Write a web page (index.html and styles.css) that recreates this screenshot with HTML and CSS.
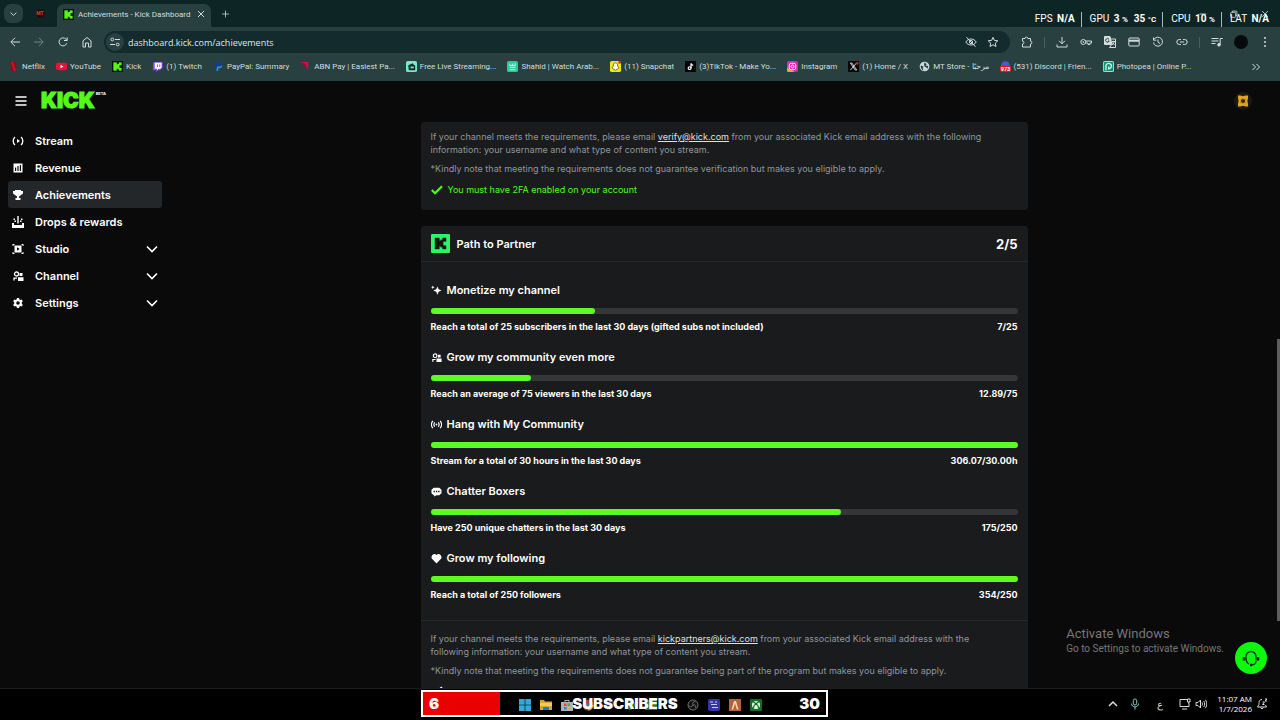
FILE: index.html
```html
<!DOCTYPE html>
<html lang="en">
<head>
  <meta charset="UTF-8">
  <meta name="viewport" content="width=device-width, initial-scale=1.0">
  <title>Achievements - Kick Dashboard</title>
  <link rel="stylesheet" href="styles.css">
</head>
<body>
  <svg class="sprite" aria-hidden="true">
    <symbol id="k-mark" viewBox="0 0 16 16">
      <rect x="2" y="2" width="5" height="12"/>
      <rect x="6" y="5" width="3" height="6"/>
      <rect x="8" y="4" width="3" height="8"/>
      <rect x="10" y="2" width="4" height="4"/>
      <rect x="10" y="10" width="4" height="4"/>
    </symbol>
    <symbol id="chevron" viewBox="0 0 12 12"><path d="M1 3.500l5 5 5-5" fill="none" stroke="currentColor" stroke-width="1.600"/></symbol>
    <symbol id="people" viewBox="0 0 12 12">
      <circle cx="4.500" cy="4" r="2" fill="none" stroke="currentColor" stroke-width="1.300"/>
      <path d="M2 10.500V8.200h3" fill="none" stroke="currentColor" stroke-width="1.300"/>
      <path d="M7.500 3h3v3h-3zM6 7.200h5.500v3.800H6z"/>
    </symbol>
    <symbol id="check" viewBox="0 0 12 12"><path d="M.8 6l3.200 3.200 7-7" fill="none" stroke="currentColor" stroke-width="2.200"/></symbol>
  </svg>

  <div class="browser">
    <div class="tab-strip">
      <button class="tab-search" aria-label="Search tabs"><svg viewBox="0 0 12 12"><use href="#chevron"/></svg></button>
      <a class="pinned-tab" href="#" aria-label="MT Store"><span>MT</span></a>
      <div class="tab">
        <svg class="favicon kick-icon" viewBox="0 0 16 16"><use href="#k-mark"/></svg>
        <span class="tab-title">Achievements - Kick Dashboard</span>
        <button aria-label="Close tab"><svg viewBox="0 0 12 12"><path d="M3 3l6 6M9 3l-6 6"/></svg></button>
      </div>
      <button class="new-tab" aria-label="New tab"><svg viewBox="0 0 12 12"><path d="M6 1.500v9M1.500 6h9"/></svg></button>
      <div class="window-buttons">
        <button aria-label="Minimize"><svg viewBox="0 0 12 12"><path d="M2 6h8"/></svg></button>
        <button aria-label="Restore"><svg viewBox="0 0 12 12"><rect x="2" y="4" width="6" height="6" rx="1"/><path d="M4 4V2.500h4.500a1 1 0 0 1 1 1V8H8"/></svg></button>
        <button aria-label="Close"><svg viewBox="0 0 12 12"><path d="M2.500 2.500l7 7M9.500 2.500l-7 7"/></svg></button>
      </div>
    </div>

    <div class="toolbar">
      <button aria-label="Back"><svg viewBox="0 0 12 12"><path d="M11 6H2M6 1.800L1.800 6 6 10.200"/></svg></button>
      <button class="dim" aria-label="Forward"><svg viewBox="0 0 12 12"><path d="M1 6h9M6 1.800L10.200 6 6 10.200"/></svg></button>
      <button aria-label="Reload"><svg viewBox="0 0 12 12"><path d="M9.800 7.300A4 4 0 1 1 9 3.200L10 4.300M10.200 1.300v3.200H7"/></svg></button>
      <button aria-label="Home"><svg viewBox="0 0 12 12"><path d="M2 11V4.800L6 1.500l4 3.300V11H7.500V7h-3v4z"/></svg></button>
      <div class="address">
        <span class="site-info"><svg viewBox="0 0 12 12"><circle cx="3.300" cy="3.500" r="1.400"/><path d="M6 3.500h5M1 8.500h5"/><circle cx="8.700" cy="8.500" r="1.400"/></svg></span>
        <input type="text" aria-label="Address" value="dashboard.kick.com/achievements">
        <button aria-label="Tracking"><svg viewBox="0 0 12 12"><path d="M.8 6C3 2 9 2 11.200 6 9 10 3 10 .8 6zM1.500 1.200l9 9.600"/><circle cx="6" cy="6" r="1.600"/></svg></button>
        <button aria-label="Bookmark"><svg viewBox="0 0 12 12"><path d="M6 1.300l1.400 3.100 3.400.4-2.500 2.300.7 3.400L6 8.800l-3 1.700.7-3.400L1.200 4.800l3.400-.4z"/></svg></button>
      </div>
      <button class="extensions" aria-label="Extensions"><svg viewBox="0 0 12 12"><path d="M1.500 2.500H4a1.400 1.400 0 0 1 2.800 0h2.700v2.700a1.400 1.400 0 0 1 0 2.800v3h-8V8a1.400 1.400 0 0 0 0-2.800z"/></svg></button>
      <span class="divider"></span>
      <button aria-label="Downloads"><svg viewBox="0 0 12 12"><path d="M6 1v6.500M3 4.800l3 3 3-3M1 8.500V11h10V8.500"/></svg></button>
      <button aria-label="Passwords"><svg viewBox="0 0 12 12"><circle cx="3.300" cy="6" r="2.500"/><circle cx="3.300" cy="6" r=".5"/><path d="M5.800 5h5.700v2H10v1.500H8V7H5.800"/></svg></button>
      <button aria-label="Translate"><svg viewBox="0 0 12 12"><path class="solid" d="M.5.5h5.500l2 8H.5z"/><path d="M7 3h4.500v8.500H5.500l2.300-3M8 5.500h3M9.500 4.800v1M10.500 5.700L8 9M8.500 6.500l2 2.500"/><path class="ink" d="M5 3.300A1.800 1.800 0 1 0 5.200 5H4"/></svg></button>
      <button aria-label="Payments"><svg viewBox="0 0 12 12"><rect x=".8" y="2" width="10.400" height="8" rx="1"/><path d="M1 4.700h10" stroke-width="2"/></svg></button>
      <button aria-label="History"><svg viewBox="0 0 12 12"><path d="M2 3.500A4.500 4.500 0 1 1 1.500 6.500M1.500 1.500v2.700h2.700M6 3.500V6.200L8 7.500"/></svg></button>
      <button aria-label="Copy link"><svg viewBox="0 0 12 12"><path d="M5 3.500H3.300a2.500 2.500 0 0 0 0 5H5M7 3.500h1.700a2.500 2.500 0 0 1 0 5H7M3.800 6h4.400"/></svg></button>
      <span class="divider"></span>
      <button aria-label="Media"><svg viewBox="0 0 12 12"><path d="M.5 2.500h7M.5 5h7M.5 7.500h4M9.200 8.500V2.500h2.500"/><circle class="solid" cx="8" cy="8.800" r="1.300"/></svg></button>
      <button aria-label="Profile"><span class="avatar"></span></button>
      <button aria-label="Menu"><svg viewBox="0 0 12 12"><path class="dots" d="M6 2v.01M6 6v.01M6 10v.01"/></svg></button>
    </div>

    <nav class="bookmarks">
      <a href="#"><svg viewBox="0 0 12 12"><path fill="#8f0c17" d="M3 1h2.500v10H3zM6.500 1H9v10H6.500z"/><path fill="#d0111c" d="M3 1h2.500L9 11H6.500z"/></svg>Netflix</a>
      <a href="#"><svg viewBox="0 0 12 12"><rect y="2" width="12" height="8" rx="2" fill="#e8123c"/><path fill="#fff" d="M5 4l3 2-3 2z"/></svg>YouTube</a>
      <a href="#"><svg class="kick-icon" viewBox="0 0 16 16"><use href="#k-mark"/></svg>Kick</a>
      <a href="#"><svg viewBox="0 0 12 12"><path fill="#8a4cf0" d="M2 1h9.500v6.500L8.500 10H6.500L4.500 12v-2H1V3z"/><path fill="#fff" d="M3 2h7.500v5L9 8.500H7L5.500 10V8.500H3z"/><path fill="#8a4cf0" d="M5.500 3.500h1v3h-1zM8 3.500h1v3H8z"/></svg>(1) Twitch</a>
      <a href="#"><svg viewBox="0 0 12 12"><path fill="#173c8c" d="M3.500 1H8c3 0 3 5-1 5H5l-.8 4H2z"/><path fill="#2d93dd" d="M9.500 4c1 3-1 4-3.500 4L5.500 11H3.700l.8-5H7c1.500 0 2-.8 2.500-2z"/></svg>PayPal: Summary</a>
      <a href="#"><svg viewBox="0 0 12 12"><path fill="#d1104f" d="M1 1h8v9z"/><path fill="#8d1038" d="M1 1l5 2 3 7z"/></svg>ABN Pay | Easiest Pa...</a>
      <a href="#"><svg viewBox="0 0 12 12"><rect width="12" height="12" rx="2" fill="#73ecc5"/><path fill="#10282a" d="M2.500 4.500l5-2 .8 1.500L10 5v5H3z"/><rect x="5" y="6" width="3.500" height="2" fill="#73ecc5"/></svg>Free Live Streaming...</a>
      <a href="#"><svg viewBox="0 0 12 12"><rect width="12" height="12" rx="2" fill="#2acb9c"/><path fill="none" stroke="#c6ffec" d="M3 3v2h6V2.500M6 3v2M3 7h6M3 9.500h6"/></svg>Shahid | Watch Arab...</a>
      <a href="#"><svg viewBox="0 0 12 12"><rect width="12" height="12" rx="2" fill="#f5e80b"/><path fill="#fff" stroke="#332f0a" stroke-width=".7" d="M6 2c2 0 2.300 1.500 2.300 3.500l1.500 2L8 9 6 10 4 9 2.200 7.500l1.500-2C3.700 3.500 4 2 6 2z"/><circle cx="10.500" cy="1.500" r="1.500" fill="#d62a2a"/></svg>(11) Snapchat</a>
      <a href="#"><svg viewBox="0 0 12 12"><rect width="12" height="12" fill="#050505"/><circle cx="5" cy="7.800" r="1.500" fill="none" stroke="#fff" stroke-width="1.300"/><path fill="none" stroke="#fff" stroke-width="1.300" d="M6.600 8V2.500c.3 1.500 1 2 2.400 2.200"/></svg>(3)TikTok - Make Yo...</a>
      <a href="#"><svg viewBox="0 0 12 12"><rect width="12" height="12" rx="2" fill="#d52bae"/><path fill="#f6a52f" d="M0 7l8 5H2a2 2 0 0 1-2-2z"/><rect x="2.500" y="2.500" width="7" height="7" rx="2" fill="none" stroke="#fff"/><circle cx="6" cy="6" r="1.600" fill="none" stroke="#fff"/></svg>Instagram</a>
      <a href="#"><svg viewBox="0 0 12 12"><rect width="12" height="12" fill="#080808"/><path fill="none" stroke="#ddd" d="M2.500 2.200h1.700l5.300 7.600H7.800zM9.300 2.200L2.700 9.800"/><circle cx="10" cy="2.500" r="1.500" fill="#c22734"/></svg>(1) Home / X</a>
      <a href="#"><svg viewBox="0 0 12 12"><circle cx="6" cy="6" r="5.300" fill="#cdd7d7"/><path fill="#2a4242" d="M2 5l3 1-1 2 1 2.500C2.500 9.500 1.500 7 2 5zM6 1.500l2.500 2L7 5l3 .5-.5 3L8 7 6 6 5.500 3.500z"/></svg>MT Store - مرحبًا</a>
      <a href="#"><svg viewBox="0 0 12 12"><circle cx="6" cy="5" r="4.800" fill="#4a58d8"/><rect y="5" width="12" height="7" rx="2" fill="#df1827"/><text class="badge-count" x="6" y="11">973</text></svg>(531) Discord | Frien...</a>
      <a href="#"><svg viewBox="0 0 12 12"><rect width="12" height="12" rx="2" fill="#8de7ce"/><rect x="1" y="1" width="10" height="10" rx="1" fill="#139275"/><path fill="none" stroke="#e5fff8" stroke-width="1.300" d="M3.200 10V6a3 3 0 1 1 3 2.500V6"/></svg>Photopea | Online P...</a>
      <button class="more" aria-label="More bookmarks"><svg viewBox="0 0 12 12"><path d="M2.500 3l3 3-3 3M6.500 3l3 3-3 3"/></svg></button>
    </nav>

    <div class="stats">
      <span>FPS <b>N/A</b></span>
      <span>GPU <b>3 <small>%</small></b><b>35 <small>°C</small></b></span>
      <span>CPU <b>10 <small>%</small></b></span>
      <span>LAT <b>N/A</b></span>
    </div>
  </div>

  <div class="page">
    <header class="page-header">
      <button class="menu-button" aria-label="Menu"><svg viewBox="0 0 12 12"><path d="M.5 2h11M.5 6h11M.5 10h11"/></svg></button>
      <a class="logo" href="#">KICK<sup>BETA</sup></a>
      <button class="account" aria-label="Account"><svg viewBox="0 0 12 12"><path fill="#e6a321" d="M1 .5h2.500L6 1.300 8.500.5H11V3l-.6 3 .6 3v2.500H8.500L6 10.700l-2.500.8H1V9l.6-3L1 3z"/><path fill="#3c2a0b" d="M6 3.200l.8 1.200H8.500l-.7 1.600.7 1.600H6.800L6 8.800l-.8-1.200H3.500L4.200 6l-.7-1.600h1.700z"/></svg></button>
    </header>

    <nav class="sidebar">
      <a href="#"><svg viewBox="0 0 12 12"><path class="line" d="M3 2C.6 4 .6 8 3 10M9 2c2.400 2 2.400 6 0 8"/><path d="M5 4l3 2-3 2z"/></svg>Stream</a>
      <a href="#"><svg viewBox="0 0 12 12"><path fill-rule="evenodd" d="M1.500 1.500h9v9h-9zM3 5.500V9h1.200V5.500zM5.400 4v5h1.200V4zM7.800 3v6H9V3z"/></svg>Revenue</a>
      <a class="active" href="#"><svg viewBox="0 0 12 12"><path d="M3 1h6v1h2v2.500L9 6 7 7.500V9h1.500v2h-5V9H5V7.500L3 6 1 4.500V2h2z"/></svg>Achievements</a>
      <a href="#"><svg viewBox="0 0 12 12"><path d="M0 7h2v2h8V7h2v5H0zM5.300 0h1.400v7.500H5.300zM1.500 2.500H3V4H1.500zM2.500 4.500H4V6H2.500zM9 2.500h1.500V4H9zM8 4.500h1.500V6H8z"/></svg>Drops &amp; rewards</a>
      <a href="#"><svg viewBox="0 0 12 12"><path fill-rule="evenodd" d="M2.500 2.500h7v7h-7zM5 4.300v3.400L7.700 6zM.5 1h2v1h-1v1h-1zM9.500 1h2v2h-1V2h-1zM.5 9h1v1h1v1h-2zM10.500 9h1v2h-2v-1h1z"/></svg>Studio<svg class="chevron" viewBox="0 0 12 12"><use href="#chevron"/></svg></a>
      <a href="#"><svg viewBox="0 0 12 12"><use href="#people"/></svg>Channel<svg class="chevron" viewBox="0 0 12 12"><use href="#chevron"/></svg></a>
      <a href="#"><svg viewBox="0 0 12 12"><path fill-rule="evenodd" d="M5 1h2l.3 1.300 1.200.7 1.300-.5 1 1.800-1 1v1.400l1 1-1 1.800-1.300-.5-1.200.7L7 11H5l-.3-1.300L3.500 9l-1.300.5-1-1.800 1-1V5.300l-1-1 1-1.800L3.500 3l1.200-.7zM6 4.200a1.800 1.800 0 1 0 0 3.600 1.800 1.800 0 0 0 0-3.600z"/></svg>Settings<svg class="chevron" viewBox="0 0 12 12"><use href="#chevron"/></svg></a>
    </nav>

    <main class="content">
      <section class="card requirements">
        <p>If your channel meets the requirements, please email <a href="mailto:verify@kick.com">verify@kick.com</a> from your associated Kick email address with the following information: your username and what type of content you stream.</p>
        <p>*Kindly note that meeting the requirements does not guarantee verification but makes you eligible to apply.</p>
        <div class="check"><svg viewBox="0 0 12 12"><use href="#check"/></svg>You must have 2FA enabled on your account</div>
      </section>

      <section class="card">
        <header class="card-header">
          <svg class="partner-icon" viewBox="-2 -2 20 20"><use href="#k-mark" width="16" height="16"/></svg>
          <h2>Path to Partner</h2>
          <strong>2/5</strong>
        </header>
        <div class="goals">
          <div class="goal">
            <h3><svg viewBox="0 0 12 12"><path d="M7 1.500l1.300 3.200L11.500 6 8.300 7.300 7 10.500 5.700 7.300 2.500 6l3.200-1.300zM2 .5l.6 1.400L4 2.500l-1.400.6L2 4.500l-.6-1.400L0 2.500l1.400-.6z"/></svg>Monetize my channel</h3>
            <progress aria-label="Monetize my channel" value="7" max="25"></progress>
            <div class="goal-text"><span>Reach a total of 25 subscribers in the last 30 days (gifted subs not included)</span><span>7/25</span></div>
          </div>
          <div class="goal">
            <h3><svg viewBox="0 0 12 12"><use href="#people"/></svg>Grow my community even more</h3>
            <progress aria-label="Grow my community even more" value="12.89" max="75"></progress>
            <div class="goal-text"><span>Reach an average of 75 viewers in the last 30 days</span><span>12.89/75</span></div>
          </div>
          <div class="goal">
            <h3><svg viewBox="0 0 12 12"><path class="line" d="M2 2C0 4.500 0 7.500 2 10M4 3.500c-1 1.500-1 3.500 0 5M8 3.500c1 1.500 1 3.500 0 5M10 2c2 2.500 2 5.500 0 8"/><circle cx="6" cy="6" r="1"/></svg>Hang with My Community</h3>
            <progress aria-label="Hang with My Community" value="30" max="30"></progress>
            <div class="goal-text"><span>Stream for a total of 30 hours in the last 30 days</span><span>306.07/30.00h</span></div>
          </div>
          <div class="goal">
            <h3><svg viewBox="0 0 12 12"><path fill-rule="evenodd" d="M3 2h6l2.500 2v4L9 10H6l-2.500 1.500V10H3L.5 8V4zM2.800 5.200v1.500h1.500V5.200zM5.300 5.200v1.500h1.500V5.200zM7.800 5.200v1.500h1.500V5.200z"/></svg>Chatter Boxers</h3>
            <progress aria-label="Chatter Boxers" value="175" max="250"></progress>
            <div class="goal-text"><span>Have 250 unique chatters in the last 30 days</span><span>175/250</span></div>
          </div>
          <div class="goal">
            <h3><svg viewBox="0 0 12 12"><path d="M6 11.500L.8 6C-.6 3 3.500-1 6 2.200 8.500-1 12.600 3 11.200 6z"/></svg>Grow my following</h3>
            <progress aria-label="Grow my following" value="250" max="250"></progress>
            <div class="goal-text"><span>Reach a total of 250 followers</span><span>354/250</span></div>
          </div>
        </div>
        <footer class="card-footer requirements">
          <p>If your channel meets the requirements, please email <a href="mailto:kickpartners@kick.com">kickpartners@kick.com</a> from your associated Kick email address with the following information: your username and what type of content you stream.</p>
          <p>*Kindly note that meeting the requirements does not guarantee being part of the program but makes you eligible to apply.</p>
          <div class="check pending"><svg viewBox="0 0 12 12"><use href="#check"/></svg></div>
        </footer>
      </section>
    </main>

    <div class="scrollbar"></div>
    <div class="watermark">
      <div>Activate Windows</div>
      <p>Go to Settings to activate Windows.</p>
    </div>
    <button class="support" aria-label="Support"><svg viewBox="0 0 20 20"><path d="M5 12V8.500a5 5 0 0 1 10 0V12M15 12.500c0 3-1.500 4.500-4.500 4.500"/><path class="thick" d="M3 9v3.500M17 9v3.500M9 17h2"/><path d="M5 12c.5 2 1.500 3 3 4"/></svg></button>
  </div>

  <div class="taskbar">
    <div class="apps">
      <svg viewBox="0 0 12 12"><path fill="#36a7dc" d="M0 0h5.700v5.700H0zM6.300 0H12v5.700H6.300zM0 6.300h5.700V12H0zM6.300 6.300H12V12H6.300z"/></svg>
      <svg viewBox="0 0 12 12"><path fill="#d9a52f" d="M0 1h4l1 1.500h7V11H0z"/><path fill="#f0cb60" d="M0 4h12v3H0z"/><path fill="#2377b8" d="M3 8h6v3H3z"/></svg>
      <svg viewBox="0 0 12 12"><path fill="#aab1b6" d="M0 3h3.500V1h5v2H12v9H0zM4.500 3h3V2h-3z"/><path fill="#e04a32" d="M3 4.500h2.500V7H3z"/><path fill="#5ba63b" d="M6.500 4.500H9V7H6.500z"/><path fill="#2684c8" d="M3 8h2.500v2.500H3z"/><path fill="#e5b32e" d="M6.500 8H9v2.500H6.500z"/></svg>
      <svg viewBox="0 0 12 12"><circle cx="6" cy="6" r="5.500" fill="#b0392d"/><path fill="#d9a52f" d="M6 6h5.500A5.500 5.500 0 0 1 6 11.500z"/><circle cx="6" cy="6" r="2.300" fill="#326fc0"/></svg>
      <svg viewBox="0 0 12 12"><circle cx="6" cy="6" r="5" fill="#1d2f5c"/></svg>
      <svg viewBox="0 0 12 12"><circle cx="6" cy="6" r="5" fill="#176b37"/></svg>
      <svg viewBox="0 0 12 12"><rect y="1" width="12" height="10" fill="#246d2e"/></svg>
      <svg viewBox="0 0 12 12"><circle cx="6" cy="6" r="4" fill="#222"/></svg>
      <svg viewBox="0 0 12 12"><circle cx="6" cy="6" r="5" fill="#111" stroke="#737373"/><path fill="none" stroke="#737373" d="M6 6C5 3.500 7 2 8.500 3M6 6c2.500-.5 3.500 1.500 2.500 3M6 6c-1 2.300-3.500 2-4 .5"/></svg>
      <svg viewBox="0 0 12 12"><rect width="12" height="12" rx="2" fill="#3436a8"/><path fill="none" stroke="#c8cbff" d="M2 3h3M3 5.500h6M4 8.500h6M7 3h2"/></svg>
      <svg viewBox="0 0 12 12"><rect width="12" height="12" fill="#b56336"/><path fill="#f1cfb6" d="M5 2h2l2.500 8.500H7.800L6 4.500 4.200 10.500H2.500z"/></svg>
      <svg viewBox="0 0 12 12"><rect width="12" height="12" rx="1" fill="#136d22"/><circle cx="6" cy="6" r="4" fill="#e3f3e4"/><path fill="none" stroke="#136d22" stroke-width="1.300" d="M3 9.500C3.500 7 5 5.500 6 4.800 7 5.500 8.500 7 9 9.500M3 2.500l3 2.300 3-2.300"/></svg>
    </div>
    <div class="tray">
      <svg viewBox="0 0 12 12"><path d="M2 8l4-4 4 4" stroke-width="1.500"/></svg>
      <svg class="mic" viewBox="0 0 12 12"><rect x="4.300" y="1" width="3.400" height="6" rx="1.700"/><path d="M2.500 5.500C2.500 10 9.500 10 9.500 5.500M6 9v2.500"/></svg>
      <span class="lang">ع</span>
      <span class="net">
        <svg viewBox="0 0 12 12"><path d="M8 1.500H1v7h9V6M3 11h5M8.500 1h2.500v3H8.500zM9.800 4v2"/></svg>
        <svg viewBox="0 0 12 12"><path d="M1 4.500h2L5.500 2v8L3 7.500H1zM7 4.500c.7 1 .7 2 0 3M8.700 3c1.300 2 1.300 4 0 6M10.300 1.800c2 2.700 2 5.700 0 8.400"/></svg>
      </span>
      <time datetime="2026-01-07T11:07">11:07 AM<br>1/7/2026</time>
      <svg class="bell" viewBox="0 0 12 12"><path d="M6 1.500C3 1.500 3 4 3 6.500L1.500 9h9L9.500 7M4.500 9.500c.5 1.500 2.500 1.500 3 0M6.500 4h2l-2 2.500h2M9 1h2L9 3h2"/></svg>
    </div>
    <div class="sub-goal">
      <div class="sub-goal-fill">6</div>
      <div class="sub-goal-title">SUBSCRIBERS</div>
      <div class="sub-goal-total">30</div>
    </div>
  </div>
</body>
</html>
```
FILE: styles.css
```css
* {
  box-sizing: border-box;
}

body {
  margin: 0;
  height: 100vh;
  display: grid;
  grid-template-rows: auto 1fr auto;
  overflow: hidden;
  background: #0a0a0a;
  color: #fff;
  font-family: Inter, sans-serif;
}

h2, h3, p {
  margin: 0;
}

a {
  color: inherit;
  text-decoration: none;
}

button {
  display: flex;
  align-items: center;
  justify-content: center;
  padding: 0;
  border: 0;
  background: none;
  color: inherit;
  font: inherit;
}

svg {
  width: 12px;
  height: 12px;
  flex: none;
  fill: currentColor;
}

.sprite {
  position: absolute;
  width: 0;
  height: 0;
}

/* browser */
.browser {
  position: relative;
  background: #284040;
  color: #d3dddd;
  font-family: Roboto, "Noto Sans", sans-serif;
  font-size: 8px;
}

.browser button svg,
.site-info svg,
.tray svg {
  fill: none;
  stroke: currentColor;
}

.browser .solid {
  fill: currentColor;
}

.browser .ink {
  stroke: #284040;
}

.browser .dots {
  stroke-width: 2;
  stroke-linecap: round;
}

.tab-strip {
  display: flex;
  height: 27px;
  padding-left: 4px;
  background: #0e2525;
}

.tab-search {
  width: 19px;
  height: 19px;
  margin-top: 4px;
  border-radius: 7px;
  background: #284040;
}

.tab-search svg {
  width: 7px;
}

.pinned-tab {
  display: grid;
  place-items: center;
  width: 34px;
}

.pinned-tab span {
  width: 9px;
  border-radius: 50%;
  background: #210d0b;
  color: #c8482c;
  font-size: 5px;
  font-weight: 700;
  line-height: 9px;
  text-align: center;
}

.tab {
  display: flex;
  align-items: center;
  width: 154px;
  margin-top: 4px;
  padding: 0 4px 3px 6px;
  border-radius: 7px 7px 0 0;
  background: #284040;
}

.favicon {
  width: 11px;
  height: 11px;
}

.tab-title {
  flex: 1;
  margin-left: 4px;
  white-space: nowrap;
}

.kick-icon {
  background: #071307;
  color: #53fc18;
}

.new-tab {
  width: 28px;
}

.new-tab svg {
  width: 9px;
}

.window-buttons {
  display: flex;
  margin-left: auto;
}

.window-buttons button {
  width: 31px;
}

.window-buttons svg {
  width: 10px;
}

.toolbar {
  display: flex;
  align-items: center;
  height: 30px;
  padding: 0 3px;
}

.toolbar > button {
  width: 24px;
}

.toolbar .dim {
  color: #728787;
}

.address {
  display: flex;
  flex: 1;
  align-items: center;
  height: 22px;
  margin-left: 5px;
  padding: 0 6px 0 2px;
  border-radius: 11px;
  background: #142b2d;
}

.address button {
  width: 22px;
}

.site-info {
  display: grid;
  place-items: center;
  width: 18px;
  height: 18px;
  border-radius: 50%;
  background: #284040;
}

.address input {
  flex: 1;
  margin-left: 4px;
  padding: 0;
  border: 0;
  background: none;
  color: #dfe8e8;
  font-family: "Open Sans", sans-serif;
  font-size: 9px;
}

.extensions {
  margin-left: 5px;
}

.divider {
  width: 1px;
  height: 11px;
  margin: 0 5px;
  background: #48605f;
}

.avatar {
  width: 14px;
  height: 14px;
  border-radius: 50%;
  background: #070a0b;
}

.bookmarks {
  display: flex;
  gap: 11px;
  height: 24px;
  padding: 0 18px 5px 8px;
}

.bookmarks a {
  display: flex;
  align-items: center;
  gap: 3px;
  white-space: nowrap;
}

.bookmarks a svg {
  width: 11px;
  height: 11px;
}

.badge-count {
  fill: #fff;
  font-size: 6px;
  font-weight: 700;
  text-anchor: middle;
}

.more {
  margin-left: auto;
}

.stats {
  position: absolute;
  top: 12px;
  right: 11px;
  display: flex;
  color: #fff;
  font-size: 10px;
  line-height: 14px;
}

.stats span + span {
  margin-left: 6px;
  padding-left: 8px;
  border-left: 1px solid #a9b8b8;
}

.stats b {
  margin-left: 2px;
}

.stats b + b {
  margin-left: 6px;
}

.stats small {
  font-size: 8px;
}

/* dashboard */
.page {
  position: relative;
  display: grid;
  grid-template-columns: 172px 1fr;
  grid-template-rows: 41px 1fr;
  min-height: 0;
  padding-right: 4px;
  overflow: hidden;
}

.page-header {
  grid-column: 1 / -1;
  display: flex;
  align-items: center;
  padding: 0 24px 1px 15px;
}

.menu-button svg {
  stroke: currentColor;
  stroke-width: 1.5;
}

.logo {
  display: flex;
  align-items: flex-start;
  margin-left: 14px;
  color: #53fc18;
  font-size: 21px;
  font-weight: 900;
  line-height: 22px;
  -webkit-text-stroke: 1px #53fc18;
}

.logo sup {
  margin-left: 1px;
  color: #fff;
  font-size: 4px;
  font-weight: 700;
  line-height: 8px;
  -webkit-text-stroke: 0;
}

.account {
  width: 18px;
  height: 18px;
  margin-left: auto;
  border-radius: 50%;
  background: #1c1911;
}

.sidebar {
  padding: 5px 10px 0 8px;
}

.sidebar a {
  display: flex;
  align-items: center;
  gap: 11px;
  height: 27px;
  padding: 0 4px;
  border-radius: 3px;
  font-size: 11px;
  font-weight: 600;
}

.sidebar .active {
  background: #24272a;
}

.sidebar .chevron {
  margin-left: auto;
}

.line {
  fill: none;
  stroke: currentColor;
  stroke-width: 1.3;
}

.content {
  width: 100%;
  max-width: 607px;
  min-height: 0;
  margin: 0 auto;
}

.card {
  margin-bottom: 16px;
  border-radius: 3px;
  background: #191b1c;
}

.requirements {
  padding: 8px 10px 14px;
  color: #8f979e;
  font-size: 9px;
  line-height: 13px;
}

.requirements p {
  margin-bottom: 6px;
  padding-right: 14px;
}

.requirements a {
  color: #dde1e4;
  text-decoration: underline;
}

.check {
  display: flex;
  align-items: center;
  gap: 5px;
  padding-top: 2px;
  color: #53fc18;
}

.check.pending {
  color: #fff;
}

.card-header {
  display: flex;
  align-items: center;
  height: 36px;
  padding: 0 10px;
  border-bottom: 1px solid #26292b;
}

.partner-icon {
  width: 19px;
  height: 19px;
  border-radius: 1px;
  background: #2bf36a;
  color: #0c1a10;
}

.card-header h2 {
  margin-left: 7px;
  font-size: 11px;
  font-weight: 600;
}

.card-header strong {
  margin-left: auto;
  font-size: 13px;
}

.goals {
  display: grid;
  gap: 16px;
  padding: 20px 10px 19px;
}

.goal h3 {
  display: flex;
  align-items: center;
  gap: 5px;
  font-size: 11px;
  font-weight: 600;
  line-height: 16px;
}

.goal h3 svg {
  width: 11px;
  height: 11px;
}

.goal progress {
  display: block;
  width: 100%;
  height: 6px;
  margin: 10px 0 6px;
  border: 0;
  appearance: none;
}

.goal progress::-webkit-progress-bar {
  border-radius: 3px;
  background: #343637;
}

.goal progress::-webkit-progress-value {
  border-radius: 3px;
  background: #5dfb22;
}

.goal-text {
  display: flex;
  justify-content: space-between;
  font-size: 9px;
  font-weight: 700;
  line-height: 13px;
}

.card-footer {
  padding-top: 11px;
  border-top: 1px solid #26292b;
}

.scrollbar {
  position: absolute;
  top: 258px;
  right: 0;
  width: 3px;
  height: 282px;
  background: #5c5e5e;
}

.watermark {
  position: absolute;
  right: 56px;
  bottom: 32px;
  color: #777;
  font-family: Roboto, sans-serif;
  font-size: 10px;
  line-height: 14px;
}

.watermark div {
  font-size: 13px;
  line-height: 16px;
}

.support {
  position: absolute;
  right: 13px;
  bottom: 14px;
  width: 32px;
  height: 32px;
  border-radius: 50%;
  background: #0cfb0c;
  color: #082908;
}

.support svg {
  width: 20px;
  height: 20px;
  fill: none;
  stroke: currentColor;
  stroke-width: 1.3;
}

.support .thick {
  stroke-width: 2.5;
}

/* taskbar */
.taskbar {
  position: relative;
  display: grid;
  grid-template-columns: 1fr auto 1fr;
  align-items: center;
  height: 32px;
  border-top: 1px solid #1c1c1c;
  background: #000;
  font-family: "Open Sans", sans-serif;
}

.apps {
  grid-column: 2;
  display: flex;
  gap: 9px;
}

.tray {
  display: flex;
  align-items: center;
  justify-content: flex-end;
  gap: 10px;
  padding: 0 12px 2px 0;
  color: #ddd;
  font-size: 8px;
  line-height: 10px;
}

.tray .mic {
  color: #8fc1c9;
}

.lang {
  width: 18px;
  font-size: 10px;
  text-align: center;
}

.net {
  display: flex;
  gap: 4px;
}

.tray time {
  color: #fff;
  text-align: right;
}

.tray .bell {
  margin-left: -6px;
}

.sub-goal {
  position: absolute;
  top: 1px;
  left: calc(50% - 219px);
  width: 407px;
  height: 27px;
  display: flex;
  align-items: center;
  border: 2px solid #fff;
  font-family: Inter, sans-serif;
  font-size: 15px;
  font-weight: 900;
}

.sub-goal-fill {
  width: 77px;
  height: 100%;
  padding-left: 6px;
  background: #eb0000;
  line-height: 23px;
}

.sub-goal-title {
  flex: 1;
  padding-right: 48px;
  text-align: center;
}

.sub-goal-total {
  width: 28px;
  padding-right: 6px;
  text-align: right;
}
```
